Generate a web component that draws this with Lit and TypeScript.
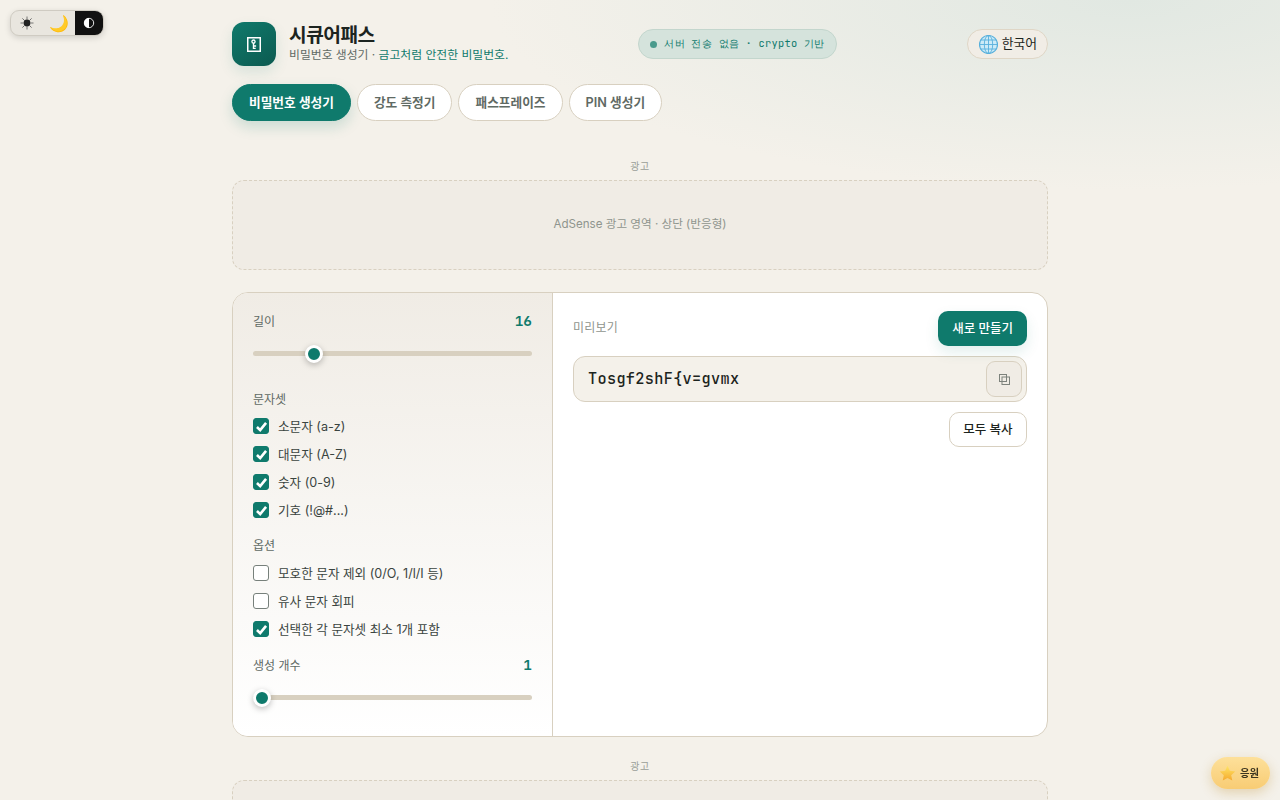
import { LitElement, html, css } from "lit";
import { customElement } from "lit/decorators.js";

const TABS = ["비밀번호 생성기", "강도 측정기", "패스프레이즈", "PIN 생성기"];

const CHARSETS = [
  { label: "소문자 (a-z)", on: true },
  { label: "대문자 (A-Z)", on: true },
  { label: "숫자 (0-9)", on: true },
  { label: "기호 (!@#...)", on: true },
];

const OPTIONS = [
  { label: "모호한 문자 제외 (0/O, 1/l/I 등)", on: false },
  { label: "유사 문자 회피", on: false },
  { label: "선택한 각 문자셋 최소 1개 포함", on: true },
];

@customElement("app-root")
export class AppRoot extends LitElement {
  static styles = css`
    :host {
      display: block;
      height: 800px;
      overflow: hidden;
      position: relative;
      color: #1c2420;
      line-height: 1.4;
      font-family: Inter, "Noto Sans CJK KR", sans-serif;
      background: radial-gradient(ellipse 640px 190px at 1130px 0, #e1e8e2 0%, rgba(225, 232, 226, 0) 100%), #f4f1ea;
    }

    .theme {
      position: fixed;
      top: 10px;
      left: 10px;
      display: flex;
      height: 24px;
      border-radius: 9px;
      border: 1px solid #cfcbc2;
      background: #e9e6df;
      overflow: hidden;
      box-shadow: 0 2px 6px rgba(0, 0, 0, 0.14);
    }
    .theme span {
      width: 32px;
      display: flex;
      align-items: center;
      justify-content: center;
    }
    .theme .moon {
      font-size: 16px;
    }
    .theme .active {
      background: #111;
      width: 28px;
    }

    .wrap {
      width: 816px;
      margin: 0 auto;
      padding-top: 22px;
    }

    header {
      display: flex;
      justify-content: space-between;
      align-items: center;
      height: 44px;
    }
    .brand {
      display: flex;
      align-items: center;
      gap: 13px;
    }
    .logo {
      width: 44px;
      height: 44px;
      border-radius: 12px;
      background: linear-gradient(145deg, #0f7a6c, #0c5a50);
      display: flex;
      align-items: center;
      justify-content: center;
      box-shadow: 0 6px 14px rgba(15, 122, 108, 0.12);
    }
    h1 {
      margin: 0 0 1px;
      font-size: 19.2px;
      line-height: 22px;
      font-weight: 700;
      letter-spacing: -0.5px;
    }
    .sub {
      font-size: 11.84px;
      line-height: 17px;
      color: #5f6a64;
    }
    .sub em {
      font-style: normal;
      color: #0f7a6c;
    }
    .status {
      display: flex;
      align-items: center;
      gap: 7px;
      height: 28px;
      padding: 0 11px;
      border-radius: 15px;
      border: 1px solid #c3d6cd;
      background: #d5e3dc;
      color: #0f7a6c;
      font-family: "JetBrains Mono", monospace;
      font-size: 10.4px;
      letter-spacing: 0.26px;
    }
    .status span:last-child {
      padding-bottom: 2px;
    }
    .dot {
      width: 7px;
      height: 7px;
      border-radius: 50%;
      background: #4a9a8c;
    }
    .lang {
      display: flex;
      align-items: center;
      gap: 4px;
      height: 28px;
      padding: 0 10px 0 11px;
      border-radius: 15px;
      border: 1px solid #dfd6c6;
      background: #f1ede6;
      font-size: 12.8px;
    }

    nav {
      display: flex;
      gap: 6px;
      margin-top: 18px;
    }
    nav button {
      height: 37px;
      padding: 0 16px;
      border-radius: 19px;
      border: 1px solid #d8d0c0;
      background: #fff;
      color: #5f6a64;
      font: 600 12.7px/1.4 Inter, "Noto Sans CJK KR", sans-serif;
    }
    nav button.active {
      background: #0f7a6c;
      border-color: #0f7a6c;
      color: #fff;
      box-shadow: 0 6px 14px rgba(15, 122, 108, 0.18);
    }

    .ad-label {
      text-align: center;
      font-size: 10px;
      line-height: 14px;
      letter-spacing: 0.5px;
      color: #9a9f98;
      margin-bottom: 7px;
    }
    .top-ad {
      margin-top: 38px;
    }
    .ad {
      height: 88px;
      box-sizing: content-box;
      border: 1px dashed #d8d0c0;
      border-radius: 12px;
      background: #f0ece5;
      display: flex;
      align-items: center;
      justify-content: center;
      font-size: 11.6px;
      color: #8f958e;
    }
    .ad span {
      padding-bottom: 2px;
    }

    .card {
      display: grid;
      grid-template-columns: 320px 1fr;
      height: 443px;
      margin-top: 22px;
      border: 1px solid #d8d0c0;
      border-radius: 16px;
      background: #fff;
      overflow: hidden;
    }
    .controls {
      padding: 19px 20px 0;
      border-right: 1px solid #d8d0c0;
      background: linear-gradient(180deg, #f0ece5 0%, #fff 100%);
    }
    .row {
      display: flex;
      justify-content: space-between;
      align-items: center;
      height: 20px;
      font-size: 12px;
      color: #5f6a64;
    }
    .row b {
      font-family: "JetBrains Mono", monospace;
      font-size: 14.4px;
      line-height: 1;
      font-weight: 700;
      margin-bottom: 2px;
      color: #0f7a6c;
    }
    .slider {
      position: relative;
      height: 5px;
      border-radius: 3px;
      background: #d8d0c0;
    }
    .len {
      margin: 19px 0 34px;
    }
    .count {
      margin-top: 19px;
    }
    .thumb {
      position: absolute;
      top: -6px;
      width: 12px;
      height: 12px;
      border-radius: 50%;
      background: #0f7a6c;
      border: 3px solid #fff;
      box-shadow: 0 2px 6px rgba(0, 0, 0, 0.25);
    }
    .group {
      font-size: 12px;
      line-height: 20px;
      color: #5f6a64;
      margin-bottom: 6px;
    }
    .group.tight {
      margin-bottom: 7px;
    }
    .checks {
      display: flex;
      flex-direction: column;
      gap: 8px;
      margin-bottom: 16px;
    }
    .checks.last {
      margin-bottom: 17px;
    }
    .check {
      display: flex;
      align-items: center;
      gap: 9px;
      height: 20px;
      font-size: 12.6px;
      color: #3a443f;
    }
    .check .label {
      padding-top: 2px;
    }
    .box {
      width: 16px;
      height: 16px;
      box-sizing: border-box;
      border-radius: 3px;
      border: 1px solid #77807b;
      background: #fff;
      display: flex;
      align-items: center;
      justify-content: center;
    }
    .box.on {
      background: #0f7a6c;
      border-color: #0f7a6c;
    }

    .preview {
      padding: 18px 20px;
    }
    .preview-head {
      display: flex;
      justify-content: space-between;
      align-items: center;
      font-size: 12px;
      letter-spacing: 0.2px;
      color: #8f958e;
    }
    .primary,
    .ghost {
      height: 35px;
      padding: 0 14px;
      border-radius: 10px;
      font: 500 12.5px/1.4 Inter, "Noto Sans CJK KR", sans-serif;
    }
    .primary {
      border: none;
      background: #0f7a6c;
      color: #fff;
      box-shadow: 0 6px 14px rgba(15, 122, 108, 0.12);
    }
    .ghost {
      display: block;
      margin: 10px 0 0 auto;
      padding: 0 13.5px;
      background: #fff;
      color: #1c2420;
      border: 1px solid #d8d0c0;
    }
    .pw {
      display: flex;
      justify-content: space-between;
      align-items: center;
      height: 46px;
      box-sizing: border-box;
      margin-top: 10px;
      padding: 0 4px 0 14px;
      border: 1px solid #d8d0c0;
      border-radius: 12px;
      background: #f4f1ea;
      font-family: "JetBrains Mono", monospace;
      font-size: 15.2px;
      letter-spacing: 0.35px;
      font-weight: 500;
    }
    .copy {
      width: 36px;
      height: 36px;
      box-sizing: border-box;
      border: 1px solid #d8d0c0;
      border-radius: 9px;
      background: #f0ece5;
      display: flex;
      align-items: center;
      justify-content: center;
    }

    .bottom-ad {
      margin-top: 22px;
    }

    .support {
      position: fixed;
      right: 10px;
      bottom: 11px;
      display: flex;
      align-items: center;
      gap: 4px;
      height: 32px;
      padding: 0 11px 0 8px;
      border-radius: 16px;
      background: linear-gradient(180deg, #fde09a, #f8cc74);
      box-shadow: 0 4px 12px rgba(190, 140, 40, 0.3);
      color: #3b3420;
      font-size: 10.4px;
      font-weight: 600;
    }
    .support span {
      padding-top: 2px;
    }
  `;

  private renderCheck(c: { label: string; on: boolean }) {
    return html`<div class="check">
      <span class="box ${c.on ? "on" : ""}">
        ${c.on
          ? html`<svg width="13" height="13" viewBox="0 0 12 12" fill="none">
              <path d="M1.8 6.5 4.8 9.4 10.2 2.6" stroke="#fff" stroke-width="2.4" />
            </svg>`
          : ""}
      </span>
      <span class="label">${c.label}</span>
    </div>`;
  }

  render() {
    return html`
      <div class="theme">
        <span>
          <svg width="14" height="14" viewBox="0 0 14 14" stroke="#555" stroke-width="0.8">
            <path d="M7 .5v3M7 10.5v3M.5 7h3M10.5 7h3M2.4 2.4l2.1 2.1M9.5 9.5l2.1 2.1M2.4 11.6l2.1-2.1M9.5 4.5l2.1-2.1" />
            <circle cx="7" cy="7" r="3.4" fill="#222" stroke="none" />
          </svg>
        </span>
        <span class="moon">🌙</span>
        <span class="active">
          <svg width="12" height="12" viewBox="0 0 12 12">
            <circle cx="6" cy="6" r="4.7" fill="none" stroke="#fff" stroke-width="0.9" />
            <path d="M6 1a5 5 0 0 0 0 10z" fill="#fff" />
          </svg>
        </span>
      </div>

      <div class="wrap">
        <header>
          <div class="brand">
            <div class="logo">
              <svg width="14" height="15" viewBox="0 0 14 15" fill="none" stroke="#fff">
                <rect x=".75" y=".75" width="12.5" height="13.5" stroke-width="1.5" />
                <circle cx="6.5" cy="4.6" r="1.6" stroke-width="1.3" />
                <path d="M6.5 6v6M6.5 9h2.6M6.5 11.4h2.2" stroke-width="1.4" />
              </svg>
            </div>
            <div>
              <h1>시큐어패스</h1>
              <div class="sub">비밀번호 생성기 · <em>금고처럼 안전한 비밀번호.</em></div>
            </div>
          </div>
          <div class="status"><span class="dot"></span><span>서버 전송 없음 · crypto 기반</span></div>
          <div class="lang">
            <svg width="19" height="19" viewBox="0 0 19 19" fill="none" stroke="#58b0dc" stroke-width="0.9">
              <circle cx="9.5" cy="9.5" r="9" fill="#cdebf7" stroke-width="1.2" />
              <ellipse cx="9.5" cy="9.5" rx="4.2" ry="9" />
              <path d="M9.5.5v18M.5 9.5h18M1.8 5h15.4M1.8 14h15.4" />
            </svg>
            한국어
          </div>
        </header>

        <nav>
          ${TABS.map((t, i) => html`<button class=${i === 0 ? "active" : ""}>${t}</button>`)}
        </nav>

        <div class="top-ad">
          <div class="ad-label">광고</div>
          <div class="ad"><span>AdSense 광고 영역 · 상단 (반응형)</span></div>
        </div>

        <section class="card">
          <div class="controls">
            <div class="row"><span>길이</span><b>16</b></div>
            <div class="slider len"><span class="thumb" style="left:52px"></span></div>
            <div class="group">문자셋</div>
            <div class="checks">${CHARSETS.map((c) => this.renderCheck(c))}</div>
            <div class="group tight">옵션</div>
            <div class="checks last">${OPTIONS.map((c) => this.renderCheck(c))}</div>
            <div class="row"><span>생성 개수</span><b>1</b></div>
            <div class="slider count"><span class="thumb" style="left:0"></span></div>
          </div>
          <div class="preview">
            <div class="preview-head">
              <span>미리보기</span>
              <button class="primary">새로 만들기</button>
            </div>
            <div class="pw">
              <span>Tosgf2shF{v=gvmx</span>
              <span class="copy">
                <svg width="11" height="11" viewBox="0 0 11 11" fill="none" stroke="#7d827c">
                  <rect x=".5" y=".5" width="7" height="7" />
                  <rect x="3" y="3" width="7.5" height="7.5" />
                </svg>
              </span>
            </div>
            <button class="ghost">모두 복사</button>
          </div>
        </section>

        <div class="bottom-ad">
          <div class="ad-label">광고</div>
          <div class="ad"></div>
        </div>
      </div>

      <div class="support">
        <svg width="17" height="17" viewBox="0 0 16 16">
          <defs>
            <linearGradient id="st" x1="0" y1="0" x2="0" y2="1">
              <stop offset="0" stop-color="#ffe566" />
              <stop offset="1" stop-color="#f5a92e" />
            </linearGradient>
          </defs>
          <path d="M8 .8l2.2 4.7 5.1.6-3.8 3.5 1 5.1L8 12.2l-4.5 2.5 1-5.1L.7 6.1l5.1-.6z" fill="url(#st)" />
        </svg>
        <span>응원</span>
      </div>
    `;
  }
}
